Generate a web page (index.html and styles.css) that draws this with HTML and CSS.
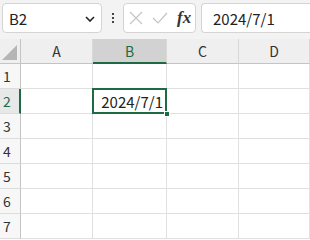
FILE: index.html
```html
<!DOCTYPE html>
<html>
<head>
<meta charset="utf-8">
<link rel="stylesheet" href="styles.css">
</head>
<body>
<div class="app">
  <div class="bar">
    <div class="namebox">
      <span class="name">B2</span>
      <svg class="chev" width="10" height="6" viewBox="0 0 10 6"><path d="M1 1 L5 5 L9 1" fill="none" stroke="#222" stroke-width="1.6"/></svg>
    </div>
    <div class="dots"><i></i><i></i><i></i></div>
    <div class="fnbox">
      <svg class="ic" width="14" height="14" viewBox="0 0 14 14"><path d="M1 1 L13 13 M13 1 L1 13" stroke="#c4c4c4" stroke-width="1.2" fill="none"/></svg>
      <svg class="ic" width="16" height="14" viewBox="0 0 16 14"><path d="M1 7 L6 12 L15 2" stroke="#c4c4c4" stroke-width="1.2" fill="none"/></svg>
      <span class="fx">fx</span>
    </div>
    <div class="formula">2024/7/1</div>
  </div>
  <div class="sheet">
    <div class="corner"><span class="tri"></span></div>
    <div class="ch">A</div>
    <div class="ch sel">B</div>
    <div class="ch">C</div>
    <div class="ch">D</div>

    <div class="rh">1</div><div class="c"></div><div class="c"></div><div class="c"></div><div class="c"></div>
    <div class="rh rsel">2</div><div class="c"></div><div class="c active"><span class="val">2024/7/1</span><span class="handle"></span></div><div class="c"></div><div class="c"></div>
    <div class="rh">3</div><div class="c"></div><div class="c"></div><div class="c"></div><div class="c"></div>
    <div class="rh">4</div><div class="c"></div><div class="c"></div><div class="c"></div><div class="c"></div>
    <div class="rh">5</div><div class="c"></div><div class="c"></div><div class="c"></div><div class="c"></div>
    <div class="rh">6</div><div class="c"></div><div class="c"></div><div class="c"></div><div class="c"></div>
    <div class="rh">7</div><div class="c"></div><div class="c"></div><div class="c"></div><div class="c"></div>
  </div>
</div>
</body>
</html>
```
FILE: styles.css
```css
* { box-sizing: border-box; }
html, body { margin: 0; padding: 0; }
body {
  width: 310px; height: 240px; overflow: hidden;
  background: #fff;
  font-family: "Noto Sans CJK JP", "Noto Sans", sans-serif;
  color: #222;
}
.app { width: 310px; height: 240px; overflow: hidden; }
.bar {
  height: 39px;
  background: #f3f3f3;
  display: flex;
  align-items: flex-start;
  padding: 3px 0 0 2px;
}
.namebox {
  width: 100px; height: 30px;
  background: #fff;
  border: 1px solid #d4d4d4;
  border-radius: 4px;
  display: flex; align-items: center; justify-content: space-between;
  padding: 0 6px 0 6px;
}
.name { font-size: 15px; line-height: 1; }
.chev { margin-top: 1px; }
.dots {
  width: 21px; height: 30px;
  display: flex; flex-direction: column; align-items: center; justify-content: center; gap: 2px;
}
.dots i { display: block; width: 2px; height: 2px; background: #444; }
.fnbox {
  width: 73px; height: 30px;
  background: #fff;
  border: 1px solid #d4d4d4;
  border-radius: 4px;
  display: flex; align-items: center;
  padding: 0 0 0 5px; gap: 9px;
}
.fx {
  font-family: "Liberation Serif", serif;
  font-style: italic; font-weight: bold; font-size: 17px; color: #333; margin-left: 0px;
}
.formula {
  margin-left: 5px;
  flex: 1; height: 30px;
  background: #fff;
  border: 1px solid #d4d4d4;
  border-right: none;
  border-radius: 4px 0 0 4px;
  font-size: 15px;
  display: flex; align-items: center;
  padding-left: 11px;
}
.sheet {
  display: grid;
  grid-template-columns: 21px 72px 74px 72px 1fr;
  grid-template-rows: repeat(8, 25px);
}
.corner, .ch {
  background: #efefef;
  border-right: 1px solid #d8d8d8;
  border-bottom: 1px solid #c4c4c4;
}
.corner { position: relative; border-right-color: #c4c4c4; }
.tri {
  position: absolute; right: 3px; bottom: 3px;
  width: 0; height: 0;
  border-left: 15px solid transparent;
  border-bottom: 15px solid #b5b5b5;
}
.ch {
  font-size: 14px;
  display: flex; align-items: center; justify-content: center;
  color: #333;
}
.ch.sel {
  background: #d2d2d2;
  color: #1e6b43;
  border-bottom: 2px solid #1e6b43;
}
.rh {
  background: #f7f7f7;
  border-right: 1px solid #c4c4c4;
  border-bottom: 1px solid #dcdcdc;
  font-size: 14px;
  display: flex; align-items: center; padding-left: 3px;
  color: #333;
}
.rh.rsel {
  background: #e8e8e8;
  color: #1e6b43;
  border-right: 2px solid #1e6b43;
}
.c {
  border-right: 1px solid #e0e0e0;
  border-bottom: 1px solid #e0e0e0;
}
.c.active {
  position: relative;
  display: flex; align-items: center; justify-content: flex-end;
}
.c.active::after {
  content: "";
  position: absolute; left: -1px; top: -1px; right: -1px; bottom: -1px;
  border: 2px solid #1e6b43;
}
.val { font-size: 15px; padding-right: 3px; color: #222; }
.handle {
  position: absolute; right: -4px; bottom: -4px;
  width: 6px; height: 6px;
  background: #1e6b43;
  border: 1px solid #fff;
  z-index: 2;
}
```
